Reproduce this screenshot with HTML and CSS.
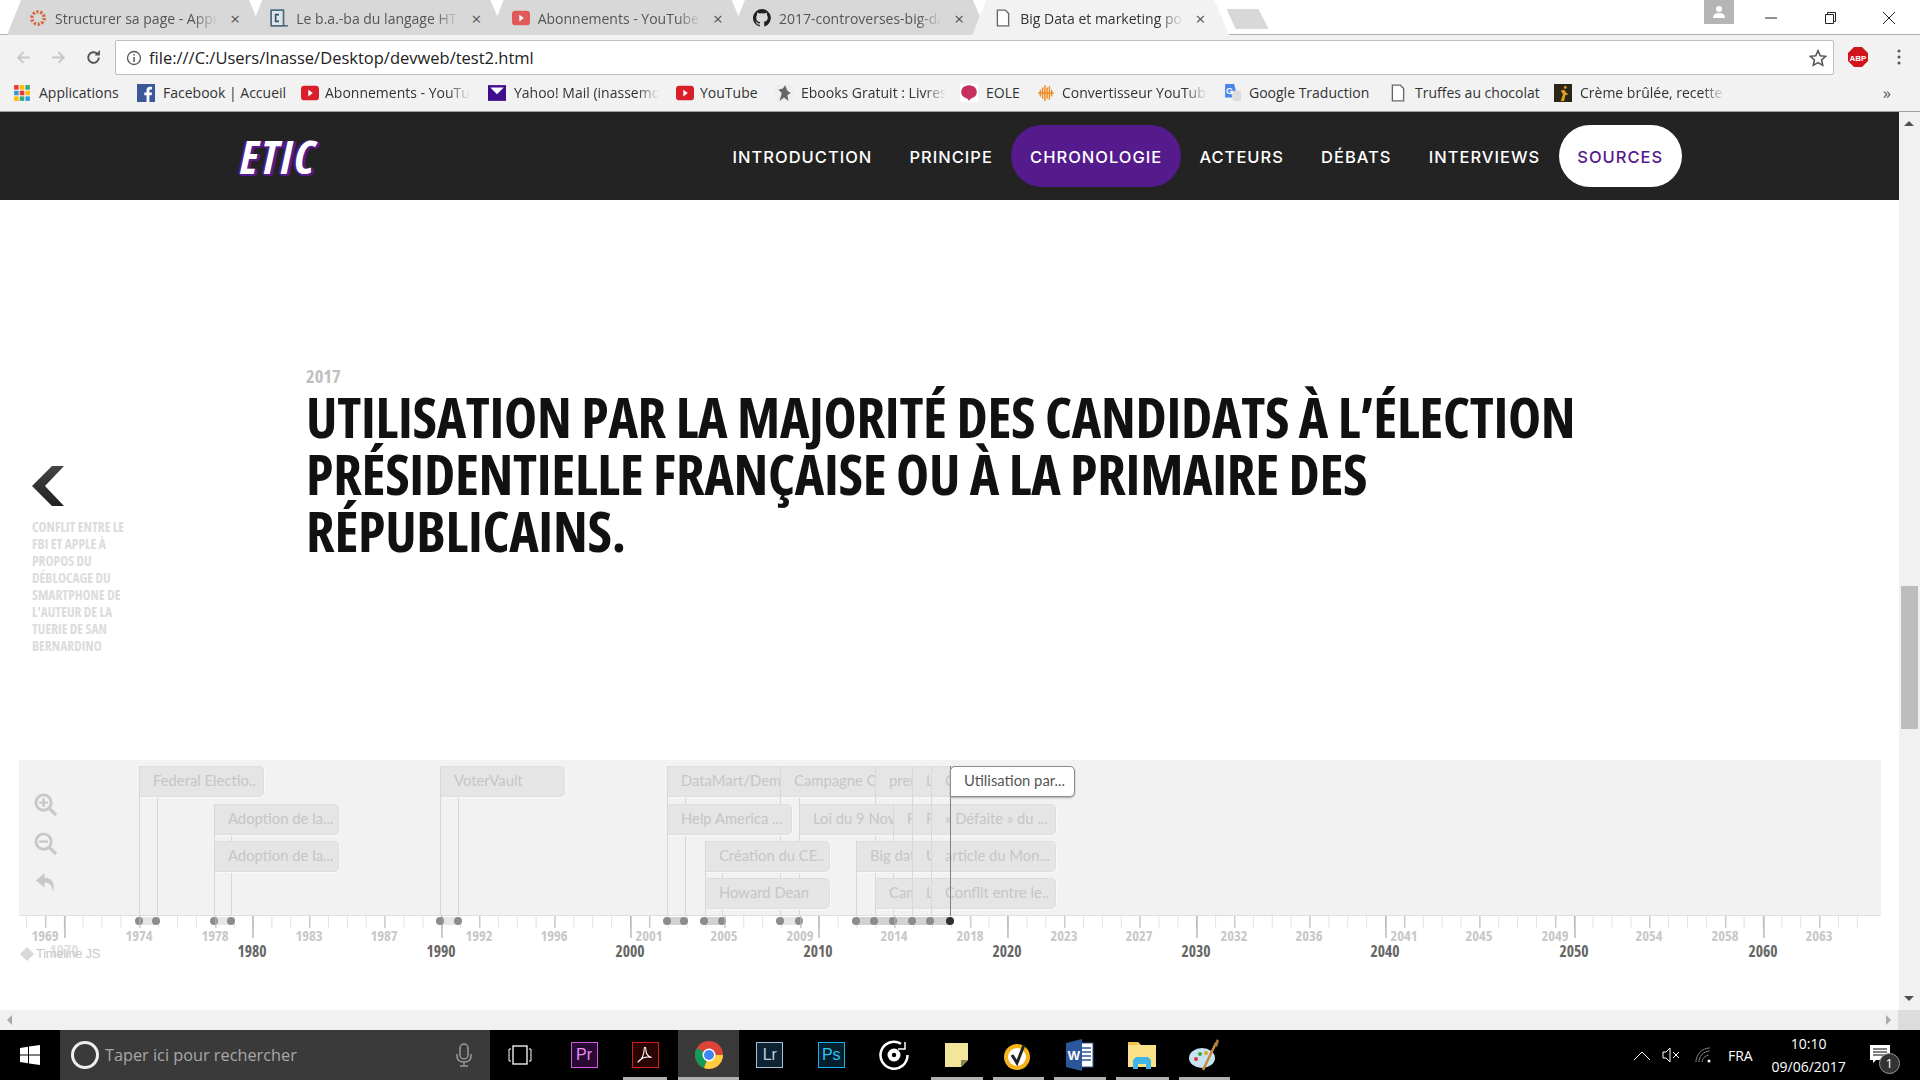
FILE: index.html
```html
<!DOCTYPE html>
<html lang="fr">
<head>
    <meta charset="UTF-8">
    <title>Big Data et marketing politique</title>
    <link rel="stylesheet" href="styles.css">
</head>
<body>

    <!-- browser tabs -->
    <div class="tabstrip">
        <div class="tab">
            <svg class="favicon" viewBox="0 0 16 16"><circle cx="8" cy="8" r="5.5" fill="none" stroke="#d9673f" stroke-width="3" stroke-dasharray="2 1.4"/></svg>
            <span class="tab-title">Structurer sa page - Apprenez</span><span class="tab-close">×</span>
        </div>
        <div class="tab">
            <svg class="favicon" viewBox="0 0 16 16"><rect x="1" y="1" width="11" height="14" fill="#dfe6ea" stroke="#4a6a80" stroke-width="1.5"/><path d="M8 5H5v6h3" fill="none" stroke="#34566c" stroke-width="1.5"/><path d="M12 15h4" stroke="#34566c"/></svg>
            <span class="tab-title">Le b.a.-ba du langage HTML</span><span class="tab-close">×</span>
        </div>
        <div class="tab">
            <svg class="favicon" viewBox="0 0 16 16"><rect x="0" y="1.5" width="16" height="13" rx="3" fill="#e05a5a"/><path d="M6.5 5l4 3-4 3z" fill="#fff"/></svg>
            <span class="tab-title">Abonnements - YouTube</span><span class="tab-close">×</span>
        </div>
        <div class="tab">
            <svg class="favicon" viewBox="0 0 16 16"><path fill="#222" d="M8 0a8 8 0 0 0-2.5 15.6c.4.1.5-.2.5-.4v-1.4c-2.2.5-2.7-1-2.7-1-.4-.9-.9-1.200-.9-1.200-.7-.5.100-.5.100-.5.800.100 1.200.8 1.200.8.700 1.200 1.900.9 2.300.7.100-.5.300-.9.500-1.100-1.800-.2-3.600-.9-3.600-4 0-.9.300-1.600.8-2.100-.1-.2-.4-1 .1-2.100 0 0 .7-.2 2.200.8a7.600 7.600 0 0 1 4 0c1.500-1 2.200-.8 2.200-.8.400 1.100.200 1.900.100 2.100.5.600.8 1.300.8 2.100 0 3.100-1.900 3.700-3.700 3.900.3.300.6.800.6 1.500v2.200c0 .2.100.5.600.4A8 8 0 0 0 8 0z"/></svg>
            <span class="tab-title">2017-controverses-big-data</span><span class="tab-close">×</span>
        </div>
        <div class="tab active">
            <svg class="favicon" viewBox="0 0 16 16"><path d="M3 1h7l3 3v11H3z" fill="#fff" stroke="#666" stroke-width="1.200"/></svg>
            <span class="tab-title">Big Data et marketing politique</span><span class="tab-close">×</span>
        </div>
        <div class="new-tab"></div>
        <div class="window-controls">
            <div class="avatar"><svg viewBox="0 0 16 16" width="16" height="16"><circle cx="8" cy="5" r="3" fill="#fff"/><path d="M2 14c0-4 3-5 6-5s6 1 6 5z" fill="#fff"/></svg></div>
            <svg class="win-btn" viewBox="0 0 14 14"><path d="M1 7h12" stroke="#222" stroke-width="1"/></svg>
            <svg class="win-btn" viewBox="0 0 14 14"><path d="M2.500 3.500h8v9h-8zM4.500 3.500v-2h8v9h-2" fill="none" stroke="#222"/></svg>
            <svg class="win-btn" viewBox="0 0 14 14"><path d="M1 1l12 12M13 1L1 13" stroke="#222"/></svg>
        </div>
    </div>

    <!-- address bar -->
    <div class="toolbar">
        <svg class="nav-arrow" viewBox="0 0 16 16"><path d="M14 8H3M8 3L3 8l5 5" fill="none" stroke="#c8c8c8" stroke-width="1.800"/></svg>
        <svg class="nav-arrow" viewBox="0 0 16 16"><path d="M2 8h11M8 3l5 5-5 5" fill="none" stroke="#c8c8c8" stroke-width="1.800"/></svg>
        <svg class="nav-arrow" viewBox="0 0 16 16"><path d="M13 8a5 5 0 1 1-1.500-3.500" fill="none" stroke="#555" stroke-width="1.800"/><path d="M14 1v5H9z" fill="#555"/></svg>
        <div class="omnibox">
            <svg class="info" viewBox="0 0 16 16"><circle cx="8" cy="8" r="6.500" fill="none" stroke="#555" stroke-width="1.300"/><path d="M8 7v5M8 4v1.600" stroke="#555" stroke-width="1.500"/></svg>
            <span class="url">file:///C:/Users/Inasse/Desktop/devweb/test2.html</span>
            <svg class="star" viewBox="0 0 16 16"><path d="M8 1.500l2 4.500 4.800.5-3.600 3.200 1 4.800L8 12.100l-4.200 2.400 1-4.800L1.200 6.500 6 6z" fill="none" stroke="#555" stroke-width="1.400"/></svg>
        </div>
        <svg class="abp" viewBox="0 0 20 20"><path d="M6 0h8l6 6v8l-6 6H6l-6-6V6z" fill="#d0141c"/><text x="10" y="13.500" text-anchor="middle" class="abp-text">ABP</text></svg>
        <svg class="menu-dots" viewBox="0 0 4 16"><circle cx="2" cy="2" r="1.500"/><circle cx="2" cy="8" r="1.500"/><circle cx="2" cy="14" r="1.500"/></svg>
    </div>

    <!-- bookmarks -->
    <div class="bookmarks">
        <div class="bm b-apps">
            <svg class="bm-icon" viewBox="0 0 16 16"><g><rect x="1" y="1" width="4" height="4" fill="#e33"/><rect x="6" y="1" width="4" height="4" fill="#fb0"/><rect x="11" y="1" width="4" height="4" fill="#3a7"/><rect x="1" y="6" width="4" height="4" fill="#39d"/><rect x="6" y="6" width="4" height="4" fill="#e33"/><rect x="11" y="6" width="4" height="4" fill="#fb0"/><rect x="1" y="11" width="4" height="4" fill="#fb0"/><rect x="6" y="11" width="4" height="4" fill="#3a7"/><rect x="11" y="11" width="4" height="4" fill="#39d"/></g></svg>
            <span>Applications</span>
        </div>
        <div class="bm b-fb">
            <svg class="bm-icon" viewBox="0 0 16 16"><rect width="16" height="16" fill="#3b5998"/><path d="M11 16v-6h2l.4-2.500H11V6c0-.8.300-1.200 1.200-1.200h1.200V2.500h-2C9.500 2.500 8.500 3.700 8.500 5.600v1.900h-2V10h2v6z" fill="#fff"/></svg>
            <span>Facebook | Accueil</span>
        </div>
        <div class="bm b-yt1">
            <svg class="bm-icon wide" viewBox="0 0 16 16"><rect y="1.500" width="16" height="13" rx="3" fill="#d9202a"/><path d="M6.500 5l4 3-4 3z" fill="#fff"/></svg>
            <span class="fade">Abonnements - YouTube</span>
        </div>
        <div class="bm b-yahoo">
            <svg class="bm-icon" viewBox="0 0 16 16"><rect y="1" width="16" height="14" fill="#3f0d8e"/><path d="M2 3h12L8 9z" fill="#fff"/></svg>
            <span class="fade">Yahoo! Mail (inassemou)</span>
        </div>
        <div class="bm b-yt2">
            <svg class="bm-icon wide" viewBox="0 0 16 16"><rect y="1.500" width="16" height="13" rx="3" fill="#d9202a"/><path d="M6.500 5l4 3-4 3z" fill="#fff"/></svg>
            <span>YouTube</span>
        </div>
        <div class="bm b-ebooks">
            <svg class="bm-icon" viewBox="0 0 16 16"><rect width="16" height="16" fill="#eee"/><path d="M4 15l2-7-3-3 4-1 2-3 2 5 3 2-3 2 1 5-4-3z" fill="#666"/></svg>
            <span class="fade">Ebooks Gratuit : Livres</span>
        </div>
        <div class="bm b-eole">
            <svg class="bm-icon" viewBox="0 0 16 16"><rect width="16" height="16" fill="#fff"/><ellipse cx="8" cy="7" rx="7" ry="6" fill="#c7305e"/><path d="M6 12l4 0-2 3z" fill="#c7305e"/></svg>
            <span>EOLE</span>
        </div>
        <div class="bm b-conv">
            <svg class="bm-icon" viewBox="0 0 16 16"><path d="M1 8h14M3 5v6M5 3v10M7 1v14M9 3v10M11 2v12M13 5v6" stroke="#f08a24" stroke-width="1.300"/></svg>
            <span class="fade">Convertisseur YouTube</span>
        </div>
        <div class="bm b-gt">
            <svg class="bm-icon" viewBox="0 0 16 16"><path d="M1 0h8l3 12H1z" fill="#4a86e8"/><path d="M6 6h9v9H8z" fill="#ddd"/><text x="5" y="8.500" text-anchor="middle" class="g-text">G</text></svg>
            <span>Google Traduction</span>
        </div>
        <div class="bm b-doc">
            <svg class="bm-icon" viewBox="0 0 16 16"><path d="M3 1h7l3 3v11H3z" fill="#fff" stroke="#666" stroke-width="1.200"/></svg>
            <span>Truffes au chocolat</span>
        </div>
        <div class="bm b-creme">
            <svg class="bm-icon" viewBox="0 0 16 16"><rect width="16" height="16" fill="#2a2618"/><path d="M6 15l2-6-2-3 3-1 2 3 2 1-3 1-1 5z" fill="#e5a020"/><circle cx="10" cy="3" r="1.200" fill="#e5a020"/></svg>
            <span class="fade">Crème brûlée, recette</span>
        </div>
        <span class="bm-more">»</span>
    </div>

    <div class="workspace">
        <div class="viewport">

            <div class="sitebar">
                <div class="logo">ETIC</div>
                <ul class="menu">
                    <li>INTRODUCTION</li>
                    <li>PRINCIPE</li>
                    <li class="current">CHRONOLOGIE</li>
                    <li>ACTEURS</li>
                    <li>DÉBATS</li>
                    <li>INTERVIEWS</li>
                    <li class="sources">SOURCES</li>
                </ul>
            </div>

            <div class="slide">
                <div class="prev">
                    <svg class="chevron" viewBox="0 0 32 40"><defs><linearGradient id="chev" x1="0" y1="0" x2="0" y2="1"><stop offset="0" stop-color="#444"/><stop offset="1" stop-color="#222"/></linearGradient></defs><path d="M20 0h12L13 20l19 20H20L0 20z" fill="url(#chev)"/></svg>
                    <p class="prev-title">Conflit entre le FBI et Apple à propos du déblocage du smartphone de l'auteur de la tuerie de San Bernardino</p>
                </div>
                <div class="headline">
                    <div class="year">2017</div>
                    <h1>Utilisation par la majorité des candidats à l’élection présidentielle française ou à la primaire des républicains.</h1>
                </div>
            </div>

            <!-- timeline: every left value is the x of a date on the axis -->
            <div class="timeline">
                <div class="band"></div>

                <div class="zoom-tools">
                    <svg viewBox="0 0 24 24"><circle cx="10" cy="10" r="8" fill="none" stroke="#c8c8c8" stroke-width="3"/><path d="M16 16l7 7" stroke="#c8c8c8" stroke-width="3.500"/><path d="M5.500 10h9M10 5.500v9" stroke="#c8c8c8" stroke-width="2.500"/></svg>
                    <svg viewBox="0 0 24 24"><circle cx="10" cy="10" r="8" fill="none" stroke="#c8c8c8" stroke-width="3"/><path d="M16 16l7 7" stroke="#c8c8c8" stroke-width="3.500"/><path d="M5.500 10h9" stroke="#c8c8c8" stroke-width="2.500"/></svg>
                    <svg viewBox="0 0 24 24"><path d="M11 2L2 10l9 7v-5c5 0 8 3 9 10 2-9-1-15-9-15z" fill="#c8c8c8"/></svg>
                </div>

                <div class="flag r1" style="left:157px"></div>
                <div class="flag r1" style="left:139px"><div class="flag-body">Federal Electio..</div></div>
                <div class="flag r2" style="left:231px"></div>
                <div class="flag r2" style="left:214px"><div class="flag-body">Adoption de la...</div></div>
                <div class="flag r3" style="left:214px"><div class="flag-body">Adoption de la...</div></div>
                <div class="flag r1" style="left:458px"></div>
                <div class="flag r1" style="left:440px"><div class="flag-body">VoterVault</div></div>

                <div class="flag r1" style="left:685px"></div>
                <div class="flag r1" style="left:667px"><div class="flag-body">DataMart/Dem..</div></div>
                <div class="flag r1" style="left:799px"></div>
                <div class="flag r1" style="left:780px"><div class="flag-body">Campagne Oba..</div></div>
                <div class="flag r1" style="left:875px"><div class="flag-body">premier..</div></div>
                <div class="flag r1" style="left:912px"><div class="flag-body">L..</div></div>
                <div class="flag r1" style="left:931px"><div class="flag-body">C..</div></div>
                <div class="flag r2" style="left:667px"><div class="flag-body">Help America ...</div></div>
                <div class="flag r2" style="left:799px"><div class="flag-body">Loi du 9 Nov...</div></div>
                <div class="flag r2" style="left:893px"><div class="flag-body">F..</div></div>
                <div class="flag r2" style="left:912px"><div class="flag-body">F..</div></div>
                <div class="flag r2" style="left:931px"><div class="flag-body">« Défaite » du ...</div></div>
                <div class="flag r3" style="left:722px"></div>
                <div class="flag r3" style="left:705px"><div class="flag-body">Création du CE..</div></div>
                <div class="flag r4" style="left:705px"><div class="flag-body">Howard Dean</div></div>
                <div class="flag r3" style="left:856px"><div class="flag-body">Big data...</div></div>
                <div class="flag r4" style="left:875px"><div class="flag-body">Campagne..</div></div>
                <div class="flag r3" style="left:912px"><div class="flag-body">U..</div></div>
                <div class="flag r4" style="left:912px"><div class="flag-body">L..</div></div>
                <div class="flag r3" style="left:931px"><div class="flag-body">article du Mon...</div></div>
                <div class="flag r4" style="left:931px"><div class="flag-body">Conflit entre le..</div></div>
                <div class="flag r1 selected" style="left:950px"><div class="flag-body">Utilisation par...</div></div>

                <div class="ticks"></div>

                <div class="era pale" style="left:139px;width:18px"></div>
                <div class="era pale" style="left:214px;width:18px"></div>
                <div class="era pale" style="left:440px;width:18px"></div>
                <div class="era" style="left:667px;width:18px"></div>
                <div class="era" style="left:704px;width:18px"></div>
                <div class="era pale" style="left:780px;width:19px"></div>
                <div class="era" style="left:856px;width:94px"></div>

                <i class="dot" style="left:139px"></i><i class="dot" style="left:156px"></i>
                <i class="dot" style="left:214px"></i><i class="dot" style="left:231px"></i>
                <i class="dot" style="left:440px"></i><i class="dot" style="left:458px"></i>
                <i class="dot" style="left:667px"></i><i class="dot" style="left:684px"></i>
                <i class="dot" style="left:704px"></i><i class="dot" style="left:722px"></i>
                <i class="dot" style="left:780px"></i><i class="dot" style="left:799px"></i>
                <i class="dot" style="left:856px"></i><i class="dot" style="left:874px"></i>
                <i class="dot" style="left:893px"></i><i class="dot" style="left:912px"></i>
                <i class="dot" style="left:930px"></i><i class="dot on" style="left:950px"></i>

                <span class="yr" style="left:45px">1969</span>
                <span class="yr" style="left:139px">1974</span>
                <span class="yr" style="left:215px">1978</span>
                <span class="yr" style="left:309px">1983</span>
                <span class="yr" style="left:384px">1987</span>
                <span class="yr" style="left:479px">1992</span>
                <span class="yr" style="left:554px">1996</span>
                <span class="yr" style="left:649px">2001</span>
                <span class="yr" style="left:724px">2005</span>
                <span class="yr" style="left:800px">2009</span>
                <span class="yr" style="left:894px">2014</span>
                <span class="yr" style="left:970px">2018</span>
                <span class="yr" style="left:1064px">2023</span>
                <span class="yr" style="left:1139px">2027</span>
                <span class="yr" style="left:1234px">2032</span>
                <span class="yr" style="left:1309px">2036</span>
                <span class="yr" style="left:1404px">2041</span>
                <span class="yr" style="left:1479px">2045</span>
                <span class="yr" style="left:1555px">2049</span>
                <span class="yr" style="left:1649px">2054</span>
                <span class="yr" style="left:1725px">2058</span>
                <span class="yr" style="left:1819px">2063</span>

                <span class="yr major faint" style="left:64px">1970</span>
                <span class="yr major" style="left:252px">1980</span>
                <span class="yr major" style="left:441px">1990</span>
                <span class="yr major" style="left:630px">2000</span>
                <span class="yr major" style="left:818px">2010</span>
                <span class="yr major" style="left:1007px">2020</span>
                <span class="yr major" style="left:1196px">2030</span>
                <span class="yr major" style="left:1385px">2040</span>
                <span class="yr major" style="left:1574px">2050</span>
                <span class="yr major" style="left:1763px">2060</span>

                <div class="credit"><i class="diamond"></i>Timeline JS</div>
            </div>
        </div>

        <div class="v-scroll">
            <i class="arrow up"></i>
            <div class="v-thumb"></div>
            <i class="arrow down"></i>
        </div>
    </div>

    <div class="h-scroll">
        <i class="arrow left"></i>
        <i class="arrow right"></i>
        <div class="corner"></div>
    </div>

    <!-- windows taskbar -->
    <div class="taskbar">
        <div class="start">
            <svg viewBox="0 0 20 20" width="20" height="20"><path d="M0 3l8-1.200V9.500H0zM9 1.600L20 0v9.500H9zM0 10.500h8v7.700L0 17zM9 10.500h11V20L9 18.400z" fill="#fff"/></svg>
        </div>
        <div class="search">
            <i class="cortana"></i>
            <span>Taper ici pour rechercher</span>
            <svg class="mic" viewBox="0 0 16 24"><rect x="4" y="1" width="8" height="15" rx="4" fill="none" stroke="#999" stroke-width="1.500"/><path d="M1 11v2c0 4 3 6 7 6s7-2 7-6v-2M8 19v3M4 23h8" fill="none" stroke="#999" stroke-width="1.500"/></svg>
        </div>
        <div class="task-icons">
            <div class="task t-view"><svg viewBox="0 0 24 24" width="24" height="24"><rect x="5" y="3" width="14" height="18" fill="none" stroke="#fff" stroke-width="1.300"/><path d="M3 6H1v12h2M21 6h2v12h-2" fill="none" stroke="#fff"/></svg></div>
            <div class="task t-pr"><div class="app-tile pr">Pr</div></div>
            <div class="task t-ac running"><div class="app-tile ac"><svg viewBox="0 0 24 24" width="20" height="20"><path d="M4 20c4-2 7-9 7-15 0-3 2-3 2 0 0 5 3 9 7 10-5-1-11 0-14 3-2 2-3 3-2 2z" fill="none" stroke="#fff" stroke-width="1.300"/></svg></div></div>
            <div class="task t-chrome active">
                <svg viewBox="0 0 28 28" width="28" height="28"><circle cx="14" cy="14" r="14" fill="#db4437"/><path d="M14 14L2 7A14 14 0 0 0 9 27z" fill="#0f9d58"/><path d="M14 14l-5 13A14 14 0 0 0 28 14z" fill="#ffcd40"/><circle cx="14" cy="14" r="6.500" fill="#fff"/><circle cx="14" cy="14" r="5" fill="#4285f4"/></svg>
            </div>
            <div class="task t-lr"><div class="app-tile lr">Lr</div></div>
            <div class="task t-ps"><div class="app-tile ps">Ps</div></div>
            <div class="task t-groove"><svg viewBox="0 0 30 30" width="30" height="30"><path d="M22 3.700A13.500 13.500 0 1 0 28.500 15" fill="none" stroke="#fff" stroke-width="2.500"/><circle cx="15" cy="15" r="6.500" fill="#fff"/><circle cx="15" cy="15" r="2.200" fill="#000"/><path d="M26 2v7h-7" fill="none" stroke="#fff" stroke-width="1.500"/></svg></div>
            <div class="task t-sticky running"><svg viewBox="0 0 23 24" width="23" height="24"><path d="M0 0h23v17l-7 7H0z" fill="#f3e69c"/><path d="M23 17h-7v7z" fill="#8a8458"/></svg></div>
            <div class="task t-norton running"><svg viewBox="0 0 28 32" width="28" height="32"><circle cx="13" cy="18" r="13" fill="#f5b21b"/><circle cx="13" cy="18" r="9" fill="#fff"/><path d="M8 16l5 8 7-18" fill="none" stroke="#222" stroke-width="3"/></svg></div>
            <div class="task t-word running"><svg viewBox="0 0 28 32" width="28" height="32"><rect x="11" y="4" width="16" height="24" fill="#fff" stroke="#2b579a"/><path d="M15 9h10M15 13h10M15 17h10M15 21h10" stroke="#2b579a" stroke-width="1.500"/><path d="M0 4L16 0v32L0 28z" fill="#2b579a"/><text x="8" y="21" text-anchor="middle" class="w-text">W</text></svg></div>
            <div class="task t-folder running"><svg viewBox="0 0 28 28" width="28" height="28"><path d="M0 1h10l3 3h15v22H0z" fill="#fbe08a"/><path d="M0 1h10v3H0z" fill="#f3c24c"/><path d="M5 28v-9l3-3h12l3 3v9h-5v-5h-8v5z" fill="#3fb6e8"/></svg></div>
            <div class="task t-paint running"><svg viewBox="0 0 30 32" width="30" height="32"><ellipse cx="13" cy="19" rx="13" ry="10" fill="#c5e3f3"/><circle cx="7" cy="20" r="2" fill="#d33"/><circle cx="11" cy="15" r="2" fill="#3a3"/><circle cx="17" cy="14" r="2" fill="#e8a020"/><path d="M14 31L27 4" stroke="#c98a3c" stroke-width="2.500"/><path d="M25 6l3-6 2 2-2 6z" fill="#a97a44"/></svg></div>
        </div>
        <div class="tray">
            <svg class="tray-chev" viewBox="0 0 16 9"><path d="M0 9l8-8 8 8" fill="none" stroke="#fff"/></svg>
            <svg class="tray-sound" viewBox="0 0 18 16"><path d="M1 5h3l4-4v14l-4-4H1z" fill="none" stroke="#fff"/><path d="M11 5l6 6M17 5l-6 6" stroke="#fff"/></svg>
            <svg class="tray-wifi" viewBox="0 0 16 16"><path d="M1 15A14 14 0 0 1 15 1M4 15A11 11 0 0 1 15 4M7 15a8 8 0 0 1 7-7" fill="none" stroke="#bbb" stroke-dasharray="1.500 .6"/><circle cx="14" cy="14" r="1.500" fill="#fff"/></svg>
            <span class="lang">FRA</span>
            <div class="clock"><span>10:10</span><span>09/06/2017</span></div>
            <div class="notif">
                <svg viewBox="0 0 20 20" width="20" height="20"><path d="M0 0h20v15H6l-3 3v-3H0z" fill="#fff"/><path d="M3 4h14M3 7h14M3 10h14" stroke="#000"/></svg>
                <b class="badge">1</b>
            </div>
        </div>
    </div>

</body>
</html>
```

FILE: styles.css
```css
* {
    box-sizing: border-box;
}
html, body {
    margin: 0;
    height: 100%;
}
body {
    width: 1920px;
    height: 1080px;
    display: flex;
    flex-direction: column;
    overflow: hidden;
    font-family: "Open Sans", sans-serif;
    background-color: white;
    color: #222;
}

/* tabs */
.tabstrip {
    height: 35px;
    display: flex;
    padding-left: 7px;
    background-color: white;
    border-bottom: 1px solid #b0b0b0;
    flex: none;
}
.tab {
    width: 257px;
    height: 35px;
    margin-right: -15.700px;
    padding: 1px 24px 0 22px;
    display: flex;
    align-items: center;
    font-size: 14px;
    color: #555;
    background-color: #d8d8d8;
    clip-path: polygon(0 100%, 14px 0, 242px 0, 100% 100%);
}
.tab.active {
    background-color: #f2f2f2;
    color: #333;
    position: relative;
}
.favicon {
    width: 18px;
    height: 18px;
    margin-right: 8px;
    flex: none;
}
.tab-title {
    flex: 1;
    white-space: nowrap;
    overflow: hidden;
    mask-image: linear-gradient(to right, black 85%, transparent);
}
.tab-close {
    width: 22px;
    text-align: right;
    font-size: 17px;
    color: #555;
}
.new-tab {
    width: 42px;
    height: 20px;
    margin: 9px 0 0 13px;
    background-color: #d8d8d8;
    clip-path: polygon(0 0, 32px 0, 100% 100%, 9px 100%);
}
.window-controls {
    margin-left: auto;
    display: flex;
    align-items: flex-start;
    padding-right: 24px;
}
.avatar {
    width: 30px;
    height: 24px;
    margin-right: 30px;
    background-color: #b5b5b5;
    display: flex;
    align-items: center;
    justify-content: center;
}
.win-btn {
    width: 14px;
    height: 14px;
    margin-top: 11px;
}
.win-btn + .win-btn {
    margin-left: 45px;
}

/* address bar */
.toolbar {
    height: 41px;
    padding: 5px 0 0 15px;
    display: flex;
    align-items: flex-start;
    background-color: #f2f2f2;
    flex: none;
}
.nav-arrow {
    width: 17px;
    height: 17px;
    margin: 9px 18px 0 0;
}
.omnibox {
    width: 1719px;
    height: 35px;
    margin-left: -5px;
    padding: 0 6px 0 10px;
    display: flex;
    align-items: center;
    background-color: white;
    border: 1px solid #bdbdbd;
    border-radius: 2px;
}
.info {
    width: 16px;
    height: 16px;
    margin-right: 7px;
}
.url {
    font-size: 16.500px;
    color: #222;
}
.star {
    width: 18px;
    height: 18px;
    margin-left: auto;
}
.abp {
    width: 20px;
    height: 20px;
    margin: 7px 0 0 14px;
}
.abp-text {
    font: bold 8px "Liberation Sans", sans-serif;
    fill: white;
}
.menu-dots {
    width: 4px;
    height: 16px;
    margin: 9px 0 0 29px;
    fill: #555;
}

/* bookmarks */
.bookmarks {
    height: 36px;
    padding: 0 0 2px 13px;
    display: flex;
    align-items: center;
    font-size: 14px;
    color: #333;
    background-color: #f2f2f2;
    border-bottom: 1px solid #a0a0a0;
    flex: none;
    position: relative;
}
.bm {
    display: flex;
    align-items: center;
    white-space: nowrap;
    overflow: hidden;
    flex: none;
}
.bm-icon {
    width: 18px;
    height: 18px;
    margin-right: 8px;
    flex: none;
}
.bm-icon.wide {
    width: 20px;
    margin-right: 5px;
}
.fade {
    flex: none;
    width: 145px;
    overflow: hidden;
    mask-image: linear-gradient(to right, black 85%, transparent);
}
.g-text {
    font: bold 8px "Liberation Sans", sans-serif;
    fill: white;
}
.b-apps { width: 124px; }
.b-fb { width: 163px; }
.b-yt1 { width: 188px; }
.b-yahoo { width: 187px; }
.b-yt2 { width: 100px; }
.b-ebooks { width: 185px; }
.b-eole { width: 77px; }
.b-conv { width: 187px; }
.b-gt { width: 165px; }
.b-doc { width: 165px; }
.b-creme { width: 168px; }
.b-conv .bm-icon, .b-gt .bm-icon { margin-right: 7px; }
.bm-more {
    margin-left: auto;
    margin-right: 29px;
    font-size: 16px;
    color: #555;
}

/* page */
.workspace {
    flex: 1;
    display: flex;
    min-height: 0;
}
.viewport {
    width: 1899px;
    display: flex;
    flex-direction: column;
}
.sitebar {
    height: 88px;
    padding-left: 240px;
    display: flex;
    align-items: center;
    background-color: #232323;
    flex: none;
}
.logo {
    width: 474px;
    font-family: "Open Sans", sans-serif;
    font-stretch: 75%;
    font-style: italic;
    font-weight: bold;
    font-size: 47px;
    letter-spacing: 2px;
    color: white;
    text-shadow: 2px 0 #551a8b, -2px 0 #551a8b, 0 2px #551a8b, 2px 2px #551a8b, 3px 1px #551a8b;
}
.menu {
    list-style: none;
    margin: 0;
    padding: 0;
    display: flex;
    font-family: Inter, sans-serif;
    font-size: 16.500px;
    font-weight: 500;
    letter-spacing: 1px;
    color: white;
}
.menu li {
    height: 62px;
    padding: 2px 18.600px 0;
    display: flex;
    align-items: center;
    border-radius: 31px;
}
.menu li.current {
    background-color: #551a8b;
}
.menu li.sources {
    background-color: white;
    color: #551a8b;
}

.slide {
    height: 560px;
    display: flex;
    flex: none;
}
.prev {
    width: 306px;
    padding: 266px 0 0 32px;
    flex: none;
}
.chevron {
    display: block;
    width: 32px;
    height: 40px;
}
.prev-title {
    width: 100px;
    margin: 13px 0 0;
    font-family: "Open Sans", sans-serif;
    font-stretch: 75%;
    font-size: 13.500px;
    font-weight: bold;
    line-height: 17px;
    text-transform: uppercase;
    color: #dcdcdc;
}
.headline {
    padding-top: 163px;
    font-family: "Open Sans", sans-serif;
    font-stretch: 75%;
}
.year {
    font-size: 18.500px;
    font-weight: bold;
    line-height: 25px;
    color: #bfbfbf;
}
h1 {
    width: 1300px;
    margin: 0;
    font-size: 56px;
    font-weight: bold;
    letter-spacing: -.3px;
    line-height: 57px;
    text-transform: uppercase;
    color: #111;
}

/* timeline */
.timeline {
    flex: 1;
    position: relative;
    font-family: "Open Sans", sans-serif;
    font-stretch: 75%;
}
.band {
    height: 156px;
    margin: 0 18px 0 19px;
    background-color: #f2f2f2;
    border-bottom: 1px solid #dfdfdf;
}
.zoom-tools {
    position: absolute;
    left: 34px;
    top: 33px;
    display: flex;
    flex-direction: column;
    gap: 16px;
}
.zoom-tools svg {
    display: block;
    width: 23px;
    height: 23px;
}
.flag {
    position: absolute;
    bottom: 94px;
    width: 125px;
    border-left: 1px solid #d8d8d8;
}
.r1 { top: 6px; }
.r2 { top: 44px; }
.r3 { top: 81px; }
.r4 { top: 118px; }
.flag-body {
    height: 31px;
    padding-left: 13px;
    overflow: hidden;
    white-space: nowrap;
    font-family: Lato, sans-serif;
    font-size: 14.800px;
    line-height: 27px;
    color: #c6c6c6;
    background-color: #e5e5e5;
    border: 1px solid #dedede;
    border-left: none;
    border-radius: 0 5px 5px 0;
    box-shadow: 1px 1px 0 #f8f8f8;
}
.flag.selected {
    border-left-color: #808080;
}
.flag.selected .flag-body {
    color: #555;
    background-color: white;
    border-color: #8c8c8c;
    border-top-left-radius: 5px;
    border-left: 1px solid #8c8c8c;
    margin-left: -1px;
    box-shadow: 0 1px 2px #aaa;
}
.ticks {
    position: absolute;
    left: 26px;
    top: 156px;
    width: 1836px;
    height: 12px;
    background-image: linear-gradient(to right, #e2e2e2 1px, transparent 1px);
    background-size: 18.877px 100%;
}
.era {
    position: absolute;
    top: 157px;
    height: 8px;
    background-color: #d2d2d2;
}
.era.pale {
    background-color: #e6e6e6;
}
.dot {
    position: absolute;
    top: 157px;
    width: 8px;
    height: 8px;
    margin-left: -4px;
    border-radius: 50%;
    background-color: #8c8c8c;
}
.dot.on {
    background-color: #2e2e2e;
}
.yr {
    position: absolute;
    top: 156px;
    padding-top: 12px;
    transform: translateX(-50%);
    font-size: 14.500px;
    font-weight: bold;
    line-height: 16px;
    color: #c8c8c8;
}
.yr::before {
    content: "";
    position: absolute;
    left: 50%;
    top: 0;
    width: 1px;
    height: 12px;
    background-color: #bdbdbd;
}
.yr.major {
    padding-top: 27px;
    font-size: 15.500px;
    color: #666;
}
.yr.major::before {
    height: 22px;
    background-color: #999;
}
.yr.major.faint {
    color: #e2e2e2;
}
.credit {
    position: absolute;
    left: 22px;
    top: 186px;
    display: flex;
    align-items: center;
    gap: 4px;
    font-family: "Liberation Sans", sans-serif;
    font-size: 13px;
    line-height: 16px;
    letter-spacing: -.3px;
    color: #c8c8c8;
}
.diamond {
    width: 10px;
    height: 10px;
    background-color: #d8d8d8;
    transform: rotate(45deg);
}

/* scrollbars */
.v-scroll {
    width: 21px;
    position: relative;
    background-color: #f1f1f1;
}
.v-thumb {
    position: absolute;
    left: 2px;
    right: 2px;
    top: 474px;
    height: 143px;
    background-color: #bdbdbd;
}
.h-scroll {
    height: 20px;
    position: relative;
    background-color: #f1f1f1;
    flex: none;
}
.corner {
    position: absolute;
    right: 0;
    top: 0;
    width: 22px;
    height: 20px;
    background-color: #dcdcdc;
}
.arrow {
    position: absolute;
    width: 0;
    height: 0;
    border: 5px solid transparent;
}
.arrow.up {
    left: 5px;
    top: 9px;
    border-top: none;
    border-bottom: 5px solid #505050;
}
.arrow.down {
    left: 5px;
    bottom: 9px;
    border-bottom: none;
    border-top: 5px solid #505050;
}
.arrow.left {
    left: 7px;
    top: 5px;
    border-left: none;
    border-right: 5px solid #aaa;
}
.arrow.right {
    left: 1886px;
    top: 5px;
    border-right: none;
    border-left: 5px solid #aaa;
}

/* taskbar */
.taskbar {
    height: 50px;
    display: flex;
    background-color: black;
    flex: none;
    color: white;
}
.start {
    width: 60px;
    padding-left: 20px;
    display: flex;
    align-items: center;
}
.search {
    width: 430px;
    padding: 0 18px 0 11px;
    display: flex;
    align-items: center;
    font-size: 16.300px;
    color: #a8a8a8;
    background-color: #3a3a3a;
}
.cortana {
    width: 28px;
    height: 28px;
    margin-right: 6px;
    border: 3px solid #eee;
    border-radius: 50%;
}
.mic {
    width: 16px;
    height: 24px;
    margin-left: auto;
}
.task-icons {
    display: flex;
    width: 1151px;
}
.task {
    position: relative;
    width: 61.500px;
    display: flex;
    align-items: center;
    justify-content: center;
}
.task.active {
    background-color: #3a3a3a;
}
.task.running::after, .task.active::after {
    content: "";
    position: absolute;
    left: 5px;
    right: 5px;
    bottom: 0;
    height: 3px;
    background-color: #b0b0b0;
}
.task.active::after {
    left: 0;
    right: 0;
}
.t-view { width: 60px; }
.t-pr { width: 68px; }
.t-ac { width: 54px; margin-right: 6px; }
.t-chrome { width: 61px; }
.t-groove { width: 64px; }
.t-folder { width: 63px; }
.app-tile {
    width: 27px;
    height: 26px;
    display: flex;
    align-items: center;
    justify-content: center;
    border: 1.500px solid;
    font-family: "Liberation Sans", sans-serif;
    font-size: 16px;
}
.pr {
    color: #e78cf2;
    border-color: #d05ce3;
    background-color: #2a0a33;
}
.ac {
    border-color: #d0201a;
    background-color: #2a0303;
}
.lr {
    color: #b6d3e6;
    border-color: #a3c4d8;
    background-color: #0f2433;
}
.ps {
    color: #2fc4f5;
    border-color: #15b5ee;
    background-color: #04202e;
}
.w-text {
    font: bold 13px "Liberation Sans", sans-serif;
    fill: white;
}
.tray {
    flex: 1;
    display: flex;
    align-items: center;
    position: relative;
    font-size: 14px;
}
.tray-chev {
    width: 16px;
    height: 9px;
    margin-left: -7px;
}
.tray-sound {
    width: 18px;
    height: 16px;
    margin-left: 12px;
}
.tray-wifi {
    width: 16px;
    height: 16px;
    margin-left: 15px;
}
.lang {
    margin-left: 17px;
}
.clock {
    width: 78px;
    margin-left: 17px;
    display: flex;
    flex-direction: column;
    gap: 5px;
    align-items: center;
    line-height: 18px;
}
.notif {
    margin-left: 22px;
    position: relative;
    height: 20px;
}
.badge {
    position: absolute;
    left: 9px;
    top: 8px;
    width: 21px;
    height: 21px;
    border: 1.500px solid #999;
    border-radius: 50%;
    background-color: #333;
    text-align: center;
    font-weight: normal;
    font-size: 13px;
    line-height: 18px;
}
```
